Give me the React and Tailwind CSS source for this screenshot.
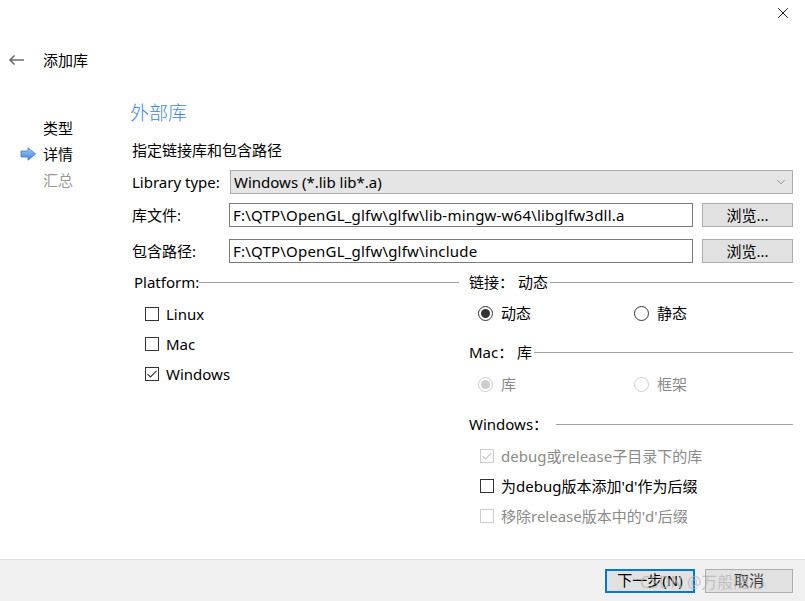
import { X, ChevronDown } from 'lucide-react';

const font = { fontFamily: '"Noto Sans", "Noto Sans CJK SC", sans-serif' };

function CheckBox({ checked, disabled, label }) {
  return (
    <div className="flex items-center h-[20px]">
      <span
        className={`w-[14px] h-[14px] border flex items-center justify-center bg-white ${
          disabled ? 'border-[#cccccc]' : 'border-[#333333]'
        }`}
      >
        {checked && (
          <svg width="12" height="12" viewBox="0 0 12 12">
            <path d="M1.5 6.2 L4.5 9 L10.5 2.8" fill="none" stroke={disabled ? '#c4c4c4' : '#333333'} strokeWidth="1.1" />
          </svg>
        )}
      </span>
      <span className={`ml-[7px] ${disabled ? 'text-[#8a8a8a]' : 'text-black'}`}>{label}</span>
    </div>
  );
}

function Radio({ checked, disabled, label }) {
  return (
    <div className="flex items-center h-[20px]">
      <span
        className={`w-[15px] h-[15px] rounded-full border flex items-center justify-center bg-white ${
          disabled ? 'border-[#cccccc]' : 'border-[#333333]'
        }`}
      >
        {checked && (
          <span className={`w-[9px] h-[9px] rounded-full ${disabled ? 'bg-[#cccccc]' : 'bg-[#333333]'}`} />
        )}
      </span>
      <span className={`ml-[8px] ${disabled ? 'text-[#8a8a8a]' : 'text-black'}`}>{label}</span>
    </div>
  );
}

function GroupTitle({ children, gap = 'ml-0' }) {
  return (
    <div className="flex items-center h-[20px]">
      <span className="whitespace-nowrap">{children}</span>
      <span className={`flex-1 h-px bg-[#a0a0a0] ${gap}`} />
    </div>
  );
}

function PathRow({ label, value }) {
  return (
    <div className="flex items-center h-[24px]">
      <span className="w-[99px] pl-[2px]">{label}</span>
      <div className="flex-1 h-[24px] border border-[#7a7a7a] bg-white flex items-center px-[3px] whitespace-nowrap overflow-hidden tracking-[0.2px]">
        {value}
      </div>
      <button className="ml-[9px] w-[91px] h-[24px] bg-[#e1e1e1] border border-[#adadad] flex items-center justify-center">
        浏览...
      </button>
    </div>
  );
}

export default function App() {
  return (
    <div className="w-[805px] h-[601px] bg-white flex flex-col text-[15px] text-black overflow-hidden" style={font}>
      {/* title bar */}
      <div className="h-[26px] flex justify-end items-center pr-[13px]">
        <X size={18} strokeWidth={1.2} className="text-black" />
      </div>

      <div className="mt-[22px] h-[24px] flex items-center">
        <svg width="17" height="12" viewBox="0 0 17 12" className="ml-[8px]">
          <path d="M16 6 H2 M6.5 1.5 L2 6 L6.5 10.5" fill="none" stroke="#6b6b6b" strokeWidth="1.6" />
        </svg>
        <span className="ml-[18px]">添加库</span>
      </div>

      <div className="flex flex-1 mt-[27px]">
        {/* left steps */}
        <div className="w-[130px] pt-[16px]">
          <div className="h-[26px] flex items-center pl-[43px]">类型</div>
          <div className="h-[26px] flex items-center relative pl-[43px]">
            <svg width="17" height="14" viewBox="0 0 17 14" className="absolute left-[20px] top-[6px]">
              <defs>
                <linearGradient id="ag" x1="0" y1="0" x2="0" y2="1">
                  <stop offset="0" stopColor="#a9cdf7" />
                  <stop offset="1" stopColor="#3b7fd9" />
                </linearGradient>
              </defs>
              <path d="M1 4 H8 V0.8 L15.5 7 L8 13.2 V10 H1 Z" fill="url(#ag)" stroke="#3d77c4" strokeWidth="0.8" />
            </svg>
            详情
          </div>
          <div className="h-[26px] flex items-center pl-[43px] text-[#9a9a9a]">汇总</div>
        </div>

        {/* main */}
        <div className="flex-1 pr-[12px]">
          <div className="h-[28px] flex items-center text-[19px] text-[#3e86e0] font-light">外部库</div>
          <div className="mt-[12px] h-[22px] flex items-center pl-[2px]">指定链接库和包含路径</div>

          <div className="mt-[9px] flex items-center h-[24px]">
            <span className="w-[100px] pl-[2px]">Library type:</span>
            <div className="flex-1 h-[24px] bg-[#e5e5e5] border border-[#adadad] flex items-center justify-between pl-[3px] pr-[4px]">
              <span>Windows (*.lib lib*.a)</span>
              <ChevronDown size={14} strokeWidth={1} className="text-[#555555]" />
            </div>
          </div>

          <div className="mt-[9px]">
            <PathRow label="库文件:" value="F:\QTP\OpenGL_glfw\glfw\lib-mingw-w64\libglfw3dll.a" />
          </div>
          <div className="mt-[12px]">
            <PathRow label="包含路径:" value="F:\QTP\OpenGL_glfw\glfw\include" />
          </div>

          <div className="mt-[9px] grid grid-cols-[329px_1fr] gap-x-[10px]">
            {/* platform */}
            <div className="pl-[4px]">
              <GroupTitle>Platform:</GroupTitle>
              <div className="pl-[11px] mt-[12px] flex flex-col gap-[10px]">
                <CheckBox label="Linux" />
                <CheckBox label="Mac" />
                <CheckBox label="Windows" checked />
              </div>
            </div>

            {/* link options */}
            <div>
              <GroupTitle gap="ml-[2px]">链接：&nbsp;动态</GroupTitle>
              <div className="mt-[11px] pl-[9px] grid grid-cols-[156px_1fr]">
                <Radio label="动态" checked />
                <Radio label="静态" />
              </div>
              <div className="mt-[19px]">
                <GroupTitle gap="ml-[2px]">Mac：&nbsp;库</GroupTitle>
              </div>
              <div className="mt-[12px] pl-[9px] grid grid-cols-[156px_1fr]">
                <Radio label="库" checked disabled />
                <Radio label="框架" disabled />
              </div>
              <div className="mt-[20px]">
                <GroupTitle gap="ml-[8px]">Windows：</GroupTitle>
              </div>
              <div className="mt-[12px] pl-[11px] flex flex-col gap-[10px]">
                <CheckBox label="debug或release子目录下的库" checked disabled />
                <CheckBox label="为debug版本添加'd'作为后缀" />
                <CheckBox label="移除release版本中的'd'后缀" disabled />
              </div>
            </div>
          </div>
        </div>
      </div>

      {/* footer */}
      <div className="h-[42px] bg-[#f0f0f0] border-t border-[#dfdfdf] flex items-center justify-end pr-[12px] gap-[10px] relative">
        <button className="w-[90px] h-[24px] bg-[#e1e1e1] border-2 border-[#0078d7] flex items-center justify-center">
          下一步(N)
        </button>
        <button className="w-[88px] h-[24px] bg-[#e1e1e1] border border-[#adadad] flex items-center justify-center text-[#333333]">
          取消
        </button>
        <span className="absolute left-[640px] top-[10px] text-[16px] text-[#b0b0b0]/70 pointer-events-none">
          CSDN @万般随心
        </span>
      </div>
    </div>
  );
}
